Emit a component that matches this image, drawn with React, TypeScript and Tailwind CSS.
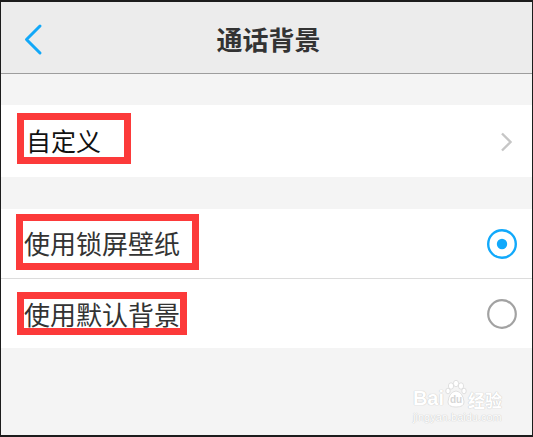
import React from "react";

const FONT = { fontFamily: '"Noto Sans CJK SC", "Noto Sans", sans-serif' };

function Marked({ children, w, h, pl, shift }: { children: React.ReactNode; w: number; h: number; pl: number; shift: number }) {
  return (
    <span
      className="box-border flex items-center border-[7px] border-[#fc3a3a]"
      style={{ width: w, height: h, paddingLeft: pl }}
    >
      <span className="relative leading-none" style={{ top: shift }}>{children}</span>
    </span>
  );
}

function Radio({ on }: { on: boolean }) {
  return on ? (
    <svg width="32" height="32" viewBox="0 0 32 32">
      <circle cx="16" cy="16" r="13.8" fill="none" stroke="#11a9fb" strokeWidth="2.4" />
      <circle cx="16" cy="16" r="5.2" fill="#11a9fb" />
    </svg>
  ) : (
    <svg width="32" height="32" viewBox="0 0 32 32">
      <circle cx="16" cy="16" r="13.8" fill="none" stroke="#a2a2a2" strokeWidth="2.2" />
    </svg>
  );
}

export default function App() {
  return (
    <div className="h-[437px] w-[533px] bg-[#1c1c1c] pt-[2px] pb-[2px] pl-[1px] pr-[1px]" style={FONT}>
      <div className="relative flex h-full flex-col overflow-hidden bg-[#f4f4f4]">
        {/* header */}
        <div className="relative flex h-[72px] items-center justify-center border-b border-[#9d9d9d] bg-[#ececec]">
          <svg className="absolute left-[22px] top-[21px]" width="22" height="34" viewBox="0 0 22 34">
            <path d="M17 3 L3.5 16.5 L17 30" fill="none" stroke="#12a8f8" strokeWidth="3" strokeLinecap="round" strokeLinejoin="round" />
          </svg>
          <span className="relative left-[2px] top-[1px] text-[26px] font-bold leading-none text-[#333]">通话背景</span>
        </div>

        <div className="h-[31px] shrink-0" />

        {/* custom */}
        <div className="flex h-[72px] shrink-0 items-start justify-between bg-white pl-[16px] pt-[8px] pr-[19px] text-[25px] text-[#111]">
          <Marked w={114} h={51} pl={2} shift={2}>自定义</Marked>
          <svg className="mt-[18px]" width="14" height="22" viewBox="0 0 14 22">
            <path d="M3 2.5 L11.5 11 L3 19.5" fill="none" stroke="#c6c6c6" strokeWidth="2.4" />
          </svg>
        </div>

        <div className="h-[32px] shrink-0" />

        {/* options */}
        <div className="shrink-0 bg-white text-[26px] text-[#333]">
          <div className="flex h-[70px] items-start justify-between border-b border-[#dcdcdc] pl-[15px] pt-[5px] pr-[14px]">
            <Marked w={183} h={56} pl={1} shift={1}>使用锁屏壁纸</Marked>
            <span className="mt-[14px]"><Radio on /></span>
          </div>
          <div className="flex h-[69px] items-start justify-between pl-[16px] pt-[13px] pr-[14px]">
            <Marked w={170} h={43} pl={0} shift={0}>使用默认背景</Marked>
            <span className="mt-[6px]"><Radio on={false} /></span>
          </div>
        </div>

        {/* watermark */}
        <div
          className="absolute bottom-[12px] right-[30px] flex flex-col items-center text-white"
          style={{ textShadow: "0 0 1px #c9c9c9, 0 0 1px #c9c9c9" }}
        >
          <div className="flex items-end gap-[1px]">
            <span className="text-[20px] font-bold leading-none" style={{ fontFamily: '"Liberation Sans", sans-serif' }}>Bai</span>
            <span className="relative flex h-[22px] w-[22px] items-end justify-center">
              <svg className="absolute left-0 top-[-6px]" width="22" height="28" viewBox="0 0 22 28">
                <g fill="#fff" stroke="#cfcfcf" strokeWidth="0.6">
                  <ellipse cx="6" cy="6" rx="2.6" ry="3.2" />
                  <ellipse cx="11" cy="3.5" rx="2.6" ry="3.2" />
                  <ellipse cx="16" cy="6" rx="2.6" ry="3.2" />
                  <ellipse cx="3" cy="11" rx="2.2" ry="2.8" />
                  <ellipse cx="19" cy="11" rx="2.2" ry="2.8" />
                  <path d="M3 22 Q4 12 11 11 Q18 12 19 22 Q19 27 11 27 Q3 27 3 22 Z" />
                </g>
              </svg>
              <span className="relative mb-[3px] text-[10px] font-bold leading-none text-[#d6d6d6]" style={{ fontFamily: '"Liberation Sans", sans-serif', textShadow: "none" }}>du</span>
            </span>
            <span className="text-[17px] font-bold leading-none">经验</span>
          </div>
          <span className="mt-[4px] text-[11px] leading-none" style={{ fontFamily: '"Liberation Sans", sans-serif' }}>jingyan.baidu.com</span>
        </div>
      </div>
    </div>
  );
}
